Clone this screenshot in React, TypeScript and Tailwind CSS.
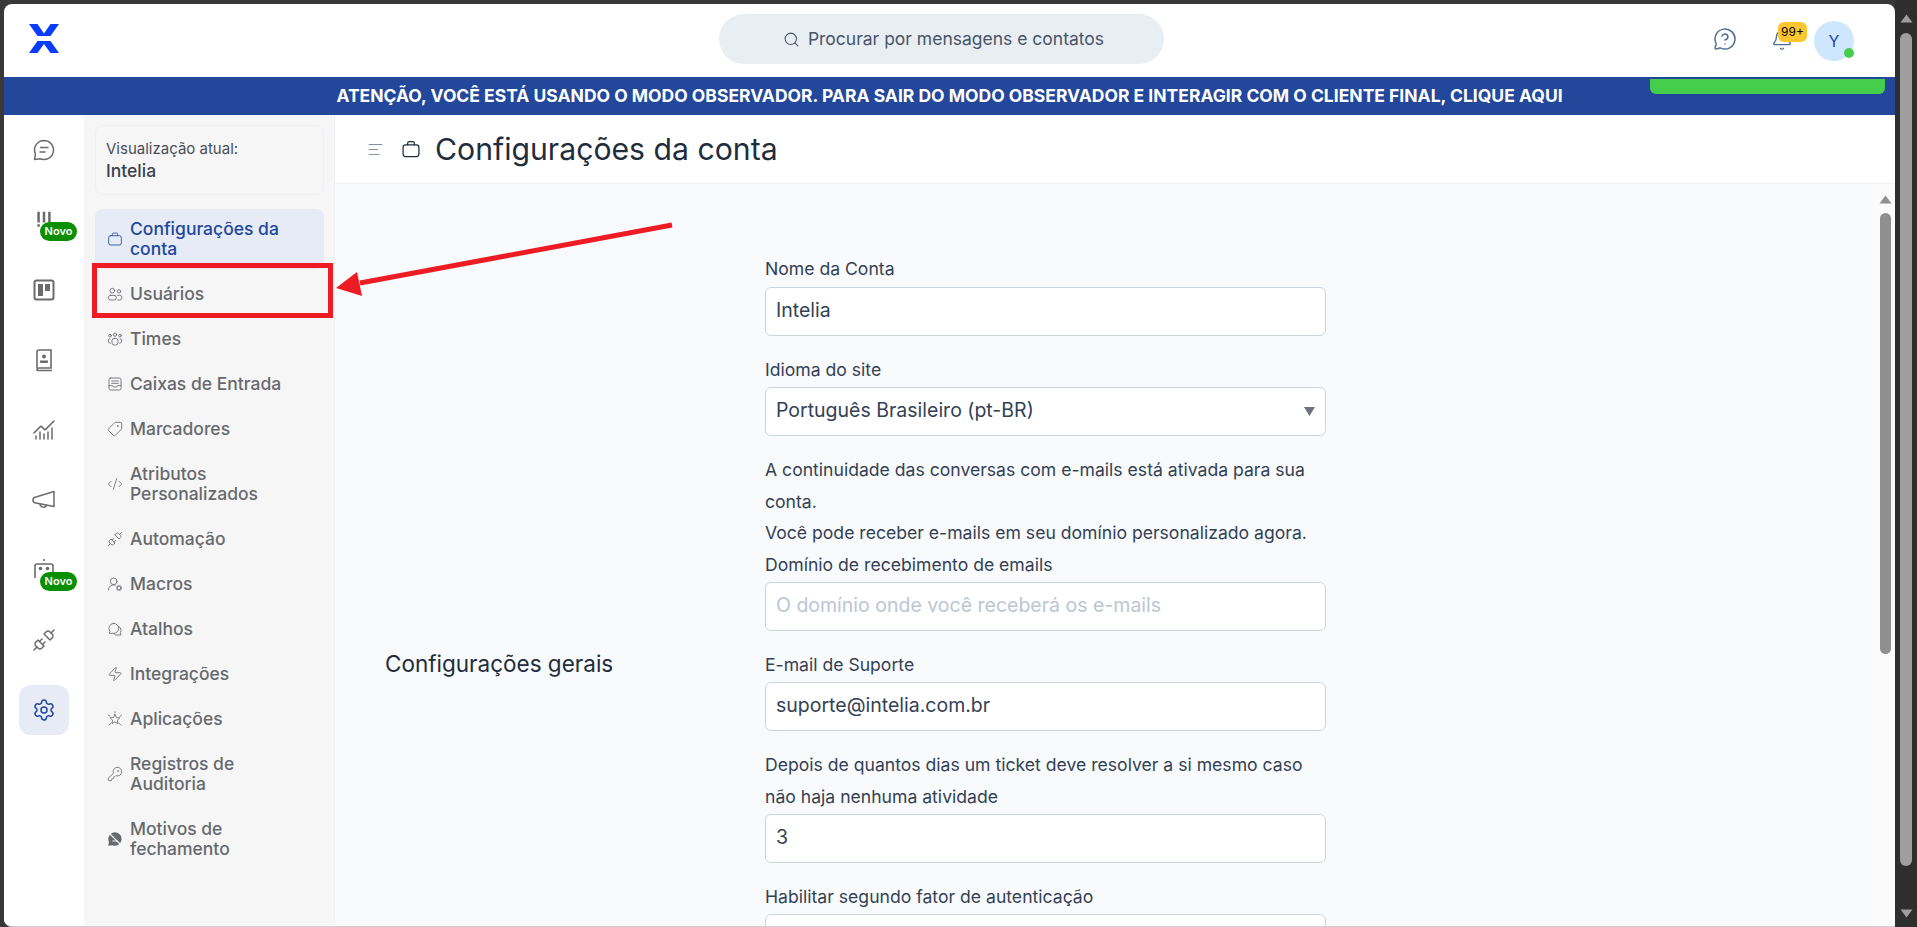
import {
  AlignLeft,
  Bell,
  ChartNoAxesCombined,
  CodeXml,
  KeyRound,
  MessageCircleQuestion,
  Search,
  Settings,
  Tag,
  Unplug,
  UserRoundCog,
  Zap,
} from 'lucide-react'

type IconProps = { size?: number; strokeWidth?: number; className?: string }

function Svg({ size = 24, strokeWidth = 1.5, className, children }: IconProps & { children: React.ReactNode }) {
  return (
    <svg width={size} height={size} viewBox="0 0 24 24" fill="none" stroke="currentColor" strokeWidth={strokeWidth} strokeLinecap="round" strokeLinejoin="round" className={className}>
      {children}
    </svg>
  )
}

const CaseIcon = (p: IconProps) => (
  <Svg {...p}>
    <rect x="2.5" y="7" width="19" height="14" rx="3" />
    <path d="M8 7V5a2 2 0 0 1 2-2h4a2 2 0 0 1 2 2v2" />
  </Svg>
)
const PeopleIcon = (p: IconProps) => (
  <Svg {...p}>
    <circle cx="8" cy="7" r="3.5" />
    <circle cx="18" cy="8" r="2.5" />
    <rect x="2" y="14" width="12" height="7" rx="3.5" />
    <path d="M16 14h3a3 3 0 0 1 0 7h-3" />
  </Svg>
)
const TeamIcon = (p: IconProps) => (
  <Svg {...p}>
    <circle cx="12" cy="5.5" r="2.5" />
    <circle cx="4.5" cy="7" r="2" />
    <circle cx="19.5" cy="7" r="2" />
    <rect x="7.5" y="11" width="9" height="10" rx="3.5" />
    <path d="M4.500 12H3.500A1.500 1.500 0 0 0 2 13.500V15a3.500 3.500 0 0 0 3 3.500M19.500 12h1a1.500 1.500 0 0 1 1.500 1.500V15a3.500 3.500 0 0 1-3 3.500" />
  </Svg>
)
const InboxIcon = (p: IconProps) => (
  <Svg {...p}>
    <rect x="3" y="3" width="18" height="18" rx="2.500" />
    <path d="M7 7.500h10M7 11h10M3 14.500h5.500l1 2h5l1-2H21" />
  </Svg>
)
const ChatsIcon = (p: IconProps) => (
  <Svg {...p}>
    <path d="M10 3.500a7.500 7.500 0 0 1 0 15H3l1.500-3A7.500 7.500 0 0 1 10 3.500z" />
    <path d="M17.500 8a6.500 6.500 0 0 1 2.500 9.500l1 3.500h-8a6 6 0 0 1-3-2.500" />
  </Svg>
)
const AppsIcon = (p: IconProps) => (
  <Svg {...p}>
    <path d="M12 5l2.200 4.600 5 .7-3.600 3.500.9 5-4.500-2.400-4.500 2.400.9-5-3.600-3.500 5-.7z" />
    <path d="M12 1v1.500M2 6l2.500 2M22 6l-2.500 2M3 21l3-2.500M21 21l-3-2.500" />
  </Svg>
)
const ClosedIcon = ({ size = 24, className }: IconProps) => (
  <svg width={size} height={size} viewBox="0 0 24 24" className={className}>
    <path fill="currentColor" d="M12 2a10 10 0 1 1-4 19.200L2 22l.9-5.800A10 10 0 0 1 12 2z" />
    <path stroke="#f6f6f6" strokeWidth="1.600" d="M3 3l18 18" />
    <path stroke="#f6f6f6" strokeWidth="1.400" d="M8 15h8" />
  </svg>
)
const ChatIcon = (p: IconProps) => (
  <Svg {...p}>
    <path d="M12 2.500a9.500 9.500 0 1 1-3.600 18.300L2.500 21.500l.9-5.500A9.500 9.500 0 0 1 12 2.500z" />
    <path d="M8.500 9.500h7.500M8 14h5" />
  </Svg>
)
const BoardIcon = (p: IconProps) => (
  <svg width={p.size} height={p.size} viewBox="0 0 24 24" className={p.className}>
    <rect x="2.500" y="2.500" width="19" height="19" rx="2" fill="none" stroke="currentColor" strokeWidth="2" />
    <rect x="6" y="6" width="5" height="12" fill="currentColor" />
    <rect x="13" y="6" width="5" height="7" fill="currentColor" />
  </svg>
)
const ContactsIcon = (p: IconProps) => (
  <svg width={p.size} height={p.size} viewBox="0 0 24 24" fill="none" className={p.className}>
    <path stroke="currentColor" strokeWidth="1.600" d="M5 20V4a2 2 0 0 1 2-2h12v18H7a2 2 0 0 0-2 2 1 1 0 0 0 1 .500h14" />
    <circle cx="12" cy="8.500" r="2" fill="currentColor" />
    <path fill="currentColor" d="M8 12.500h8v1.500a1 1 0 0 1-1 1H9a1 1 0 0 1-1-1z" />
  </svg>
)
const CampaignIcon = (p: IconProps) => (
  <Svg {...p}>
    <path d="M22 3.500v15L4 15a3 3 0 0 1 0-6z" />
    <path d="M8 16a3.500 3.500 0 0 0 6.500 1.500" />
  </Svg>
)
const BotIcon = (p: IconProps) => (
  <svg width={p.size} height={p.size} viewBox="0 0 24 24" fill="none" className={p.className}>
    <path stroke="currentColor" strokeWidth="1.600" d="M3 20V8a2 2 0 0 1 2-2h14a2 2 0 0 1 2 2v10" />
    <circle cx="8.500" cy="10.500" r="1.800" fill="currentColor" />
    <circle cx="15.500" cy="10.500" r="1.800" fill="currentColor" />
    <circle cx="12" cy="2" r="1" fill="currentColor" />
  </svg>
)
const AlertIcon = (p: IconProps) => (
  <svg width={p.size} height={p.size} viewBox="0 0 24 24" className={p.className}>
    <path fill="currentColor" d="M4 2h3v13H4zM10.500 2h3v13h-3zM17 2h3v13h-3zM4 17h3v3H4z" />
  </svg>
)

const nav = [
  { label: 'Configurações da conta', Icon: CaseIcon, active: true },
  { label: 'Usuários', Icon: PeopleIcon },
  { label: 'Times', Icon: TeamIcon },
  { label: 'Caixas de Entrada', Icon: InboxIcon },
  { label: 'Marcadores', Icon: (p: IconProps) => <Tag {...p} className="shrink-0 -scale-x-100" /> },
  { label: 'Atributos Personalizados', Icon: CodeXml },
  { label: 'Automação', Icon: Unplug },
  { label: 'Macros', Icon: UserRoundCog },
  { label: 'Atalhos', Icon: ChatsIcon },
  { label: 'Integrações', Icon: Zap },
  { label: 'Aplicações', Icon: AppsIcon },
  { label: 'Registros de Auditoria', Icon: KeyRound },
  { label: 'Motivos de fechamento', Icon: ClosedIcon },
]

const rail = [
  { Icon: ChatIcon },
  { Icon: AlertIcon, novo: true, small: true },
  { Icon: BoardIcon },
  { Icon: ContactsIcon },
  { Icon: ChartNoAxesCombined },
  { Icon: CampaignIcon },
  { Icon: BotIcon, novo: true },
  { Icon: Unplug },
  { Icon: Settings, active: true },
]

function Novo() {
  return (
    <span className="absolute left-[21px] top-[27px] flex h-[19px] w-[37px] items-center justify-center rounded-full bg-[#0a8f00] text-[11px] font-semibold text-white">
      Novo
    </span>
  )
}

function Field({ children, className = '' }: { children?: React.ReactNode; className?: string }) {
  return (
    <div className={`flex h-[49px] w-full items-center rounded-md border border-[#cbd5e1] bg-white px-[10px] pb-[2px] text-[19.5px] text-[#334155] ${className}`}>
      {children}
    </div>
  )
}

function Label({ children }: { children: React.ReactNode }) {
  return <div className="mb-px text-[17.6px] leading-8 text-[#334155]">{children}</div>
}

function Scrollbar({ track, thumb, arrow, top, bottomArrow }: { track: string; thumb: string; arrow: string; top: string; bottomArrow?: boolean }) {
  return (
    <div className={`flex h-full shrink-0 flex-col items-center ${track}`}>
      <div className={top}>
        <svg width="13" height="9" viewBox="0 0 13 9" className={arrow}>
          <path d="M6.500 0.500 L12.500 8.500 H0.500 Z" />
        </svg>
      </div>
      <div className={`rounded-full ${thumb}`} />
      {bottomArrow && (
        <svg width="13" height="9" viewBox="0 0 13 9" className={`mb-[9px] mt-auto ${arrow}`}>
          <path d="M0.500 0.500 H12.500 L6.500 8.500 Z" />
        </svg>
      )}
    </div>
  )
}

export default function App() {
  return (
    <div className="relative flex h-[927px] w-[1917px] overflow-hidden bg-[#383838] font-['Inter',sans-serif]">
      <div className="ml-1 mt-1 flex h-[923px] w-[1891px] flex-col overflow-hidden rounded-t-lg rounded-bl-lg border-b border-[#cfcfcf] bg-white">
        {/* topo */}
        <header className="relative flex h-[73px] shrink-0 items-center justify-center">
          <svg viewBox="0 0 30 30" className="absolute left-[25px] top-[20px] h-[30px] w-[30px]" fill="#0a3cff">
            <path d="M0 0H8.500L15 9.500L21.500 0H30L21.500 12H8.500ZM8.500 17H21.500L30 29H21.500L15 20L8.500 29H0Z" />
          </svg>
          <div className="mr-4 mt-[-3px] flex h-[50px] w-[445px] items-center justify-center gap-2 rounded-full bg-[#e9eef3] pl-1 text-[17.5px] text-[#475569]">
            <Search size={17} strokeWidth={1.5} />
            Procurar por mensagens e contatos
          </div>
          <MessageCircleQuestion size={24} strokeWidth={1.5} className="absolute left-[1709px] top-[23px] text-[#4f7091]" />
          <Bell size={22} strokeWidth={1.5} className="absolute left-[1767px] top-[25px] text-[#4f7091]" />
          <span className="absolute left-[1774px] top-[18px] flex h-5 w-[29px] items-center justify-center rounded-md bg-[#ffc531] text-xs text-black">
            99+
          </span>
          <div className="absolute left-[1810px] top-[17px] flex h-10 w-10 items-center justify-center rounded-full bg-[#cfe6ff] text-base text-[#22479b]">
            Y
            <span className="absolute bottom-[3px] right-0 h-[10px] w-[10px] rounded-full bg-[#44ce4b]" />
          </div>
        </header>

        {/* aviso do modo observador */}
        <div className="relative flex h-[38px] shrink-0 items-center justify-center bg-[#22479b] text-[17.5px] font-bold text-white">
          ATENÇÃO, VOCÊ ESTÁ USANDO O MODO OBSERVADOR. PARA SAIR DO MODO OBSERVADOR E INTERAGIR COM O CLIENTE FINAL, CLIQUE AQUI
          <span className="absolute left-[1646px] top-[2px] h-[15px] w-[235px] rounded-b-md bg-[#44ce4b]" />
        </div>

        <div className="flex min-h-0 flex-1">
          {/* menu de ícones */}
          <nav className="flex w-20 shrink-0 flex-col items-center gap-5 bg-white pt-[10px]">
            {rail.map(({ Icon, novo, active, small }, i) => (
              <div key={i} className={`relative flex h-[50px] w-[50px] items-center justify-center rounded-xl ${active ? 'bg-[#e7ebf5] text-[#22479b]' : 'text-[#6b6b6b]'}`}>
                <Icon size={small ? 20 : 24} strokeWidth={1.5} />
                {novo && <Novo />}
              </div>
            ))}
          </nav>

          {/* menu de configurações */}
          <aside className="flex w-[251px] shrink-0 flex-col gap-[5px] border-r border-[#eef2f7] bg-[#f6f6f6] pl-[11px] pr-[10px] pt-[10px]">
            <div className="mb-[9px] flex h-[70px] flex-col justify-center rounded-lg border border-[#edf0f4] px-[10px]">
              <div className="text-[15px] leading-[22px] text-[#4a4f57]">Visualização atual:</div>
              <div className="mt-[-1px] text-[17.5px] font-medium leading-6 text-[#3a4350]">Intelia</div>
            </div>
            {nav.map(({ label, Icon, active }) => (
              <div
                key={label}
                className={`flex items-center gap-[7px] rounded-lg py-[10px] pl-3 pr-6 text-[17.5px] font-medium leading-5 ${active ? 'bg-[#e7ebf5] text-[#22479b]' : 'text-[#66696e]'}`}
              >
                <span className="flex w-4 shrink-0">
                  <Icon size={16} strokeWidth={1.25} />
                </span>
                <span>{label}</span>
              </div>
            ))}
          </aside>

          {/* conteúdo */}
          <main className="flex min-w-0 flex-1 flex-col">
            <div className="flex h-[69px] shrink-0 items-center gap-[17px] border-b border-[#eef2f6] pl-8 text-[#1f2d3d]">
              <AlignLeft size={17} strokeWidth={1.5} className="text-[#7f93a8]" />
              <div className="flex items-center gap-[14px]">
                <CaseIcon size={20} strokeWidth={1.5} />
                <h1 className="text-[30.2px] leading-9">Configurações da conta</h1>
              </div>
            </div>
            <div className="flex min-h-0 flex-1 bg-[#f8fafc]">
              <div className="min-w-0 flex-1 overflow-hidden">
                <div className="flex h-[890px] items-center pl-[50px] pt-[69px]">
                  <div className="w-[380px] shrink-0 text-[22.5px] text-[#1f2d3d]">Configurações gerais</div>
                  <div className="w-[561px] self-start">
                    <div className="mb-[2px] text-[17.6px] leading-8 text-[#334155]">Nome da Conta</div>
                    <Field>Intelia</Field>
                    <div className="mt-[18px]">
                      <Label>Idioma do site</Label>
                      <Field className="justify-between">
                        Português Brasileiro (pt-BR)
                        <svg width="11" height="10" viewBox="0 0 11 10" fill="#6b7280"><path d="M0 1H11L5.500 10Z" /></svg>
                      </Field>
                    </div>
                    <div className="mt-[18px] text-[17.6px] leading-8 text-[#334155]">
                      <p>A continuidade das conversas com e-mails está ativada para sua conta.</p>
                      <p className="-mt-px">Você pode receber e-mails em seu domínio personalizado agora.</p>
                    </div>
                    <Label>Domínio de recebimento de emails</Label>
                    <Field className="text-[#bcc6d3]">O domínio onde você receberá os e-mails</Field>
                    <div className="mt-[18px]">
                      <Label>E-mail de Suporte</Label>
                      <Field>suporte@intelia.com.br</Field>
                    </div>
                    <div className="mt-[18px]">
                      <Label>Depois de quantos dias um ticket deve resolver a si mesmo caso não haja nenhuma atividade</Label>
                      <Field>3</Field>
                    </div>
                    <div className="mt-[18px]">
                      <Label>Habilitar segundo fator de autenticação</Label>
                      <Field />
                    </div>
                  </div>
                </div>
              </div>
              <Scrollbar track="w-5 bg-[#fbfbfb]" thumb="ml-px h-[441px] w-[11px] bg-[#8f8f8f]" arrow="fill-[#8f8f8f]" top="mb-[9px] mt-[11px]" />
            </div>
          </main>
        </div>
      </div>

      <Scrollbar track="w-[22px] bg-[#2e2e2e]" thumb="h-[833px] w-[12px] bg-[#9e9e9e]" arrow="fill-[#9e9e9e]" top="mb-[10px] mt-[14px]" bottomArrow />

      {/* destaque do tutorial */}
      <div className="absolute left-[92px] top-[263px] h-[55px] w-[241px] border-[5px] border-[#ed1c24]" />
      <svg className="absolute left-[330px] top-[215px]" width="350" height="90" viewBox="0 0 350 90" fill="#ed1c24">
        <path d="M342 10 L30 68" stroke="#ed1c24" strokeWidth="5" />
        <path d="M6 73 L27 57 L32 81 Z" />
      </svg>
    </div>
  )
}
